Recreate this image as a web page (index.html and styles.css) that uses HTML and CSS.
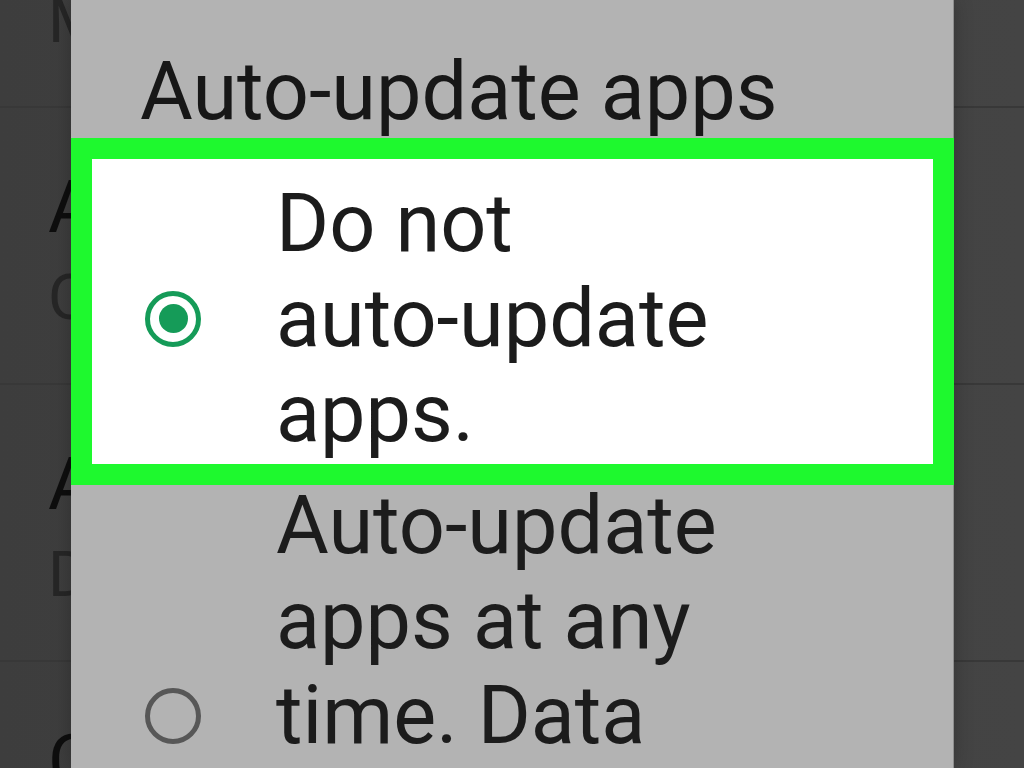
FILE: index.html
```html
<!DOCTYPE html>
<html lang="en">
<head>
<meta charset="utf-8">
<title>Auto-update apps</title>
<link rel="stylesheet" href="styles.css">
</head>
<body>
<div class="screen">
  <ul class="settings">
    <li class="setting">
      <div class="setting-title">Notifications</div>
      <div class="setting-sub">Manage notifications</div>
    </li>
    <li class="setting">
      <div class="setting-title">App download preference</div>
      <div class="setting-sub">Over any network</div>
    </li>
    <li class="setting">
      <div class="setting-title">Auto-update apps</div>
      <div class="setting-sub">Do not auto-update apps</div>
    </li>
    <li class="setting">
      <div class="setting-title">Clear local search history</div>
      <div class="setting-sub">Remove searches you have performed</div>
    </li>
  </ul>

  <div class="dialog" role="dialog" aria-label="Auto-update apps">
    <h1 class="dialog-title">Auto-update apps</h1>
    <ul class="options">
      <li class="option option-highlight">
        <span class="radio radio-on"><span class="radio-dot"></span></span>
        <span class="option-label">Do not<br>auto-update<br>apps.</span>
      </li>
      <li class="option">
        <span class="radio"></span>
        <span class="option-label">Auto-update<br>apps at any<br>time. Data<br>charges may<br>apply.</span>
      </li>
    </ul>
  </div>
</div>
</body>
</html>
```

FILE: styles.css
```css
html, body {
  margin: 0;
  padding: 0;
  width: 1024px;
  height: 768px;
  overflow: hidden;
  background: #414141;
  font-family: Roboto, "Liberation Sans", sans-serif;
}

.screen {
  position: relative;
  width: 1024px;
  height: 768px;
  overflow: hidden;
  background: linear-gradient(90deg, #3d3d3d 0%, #414141 50%, #444444 100%);
}

/* dimmed settings list behind the dialog */
.settings {
  list-style: none;
  margin: -169px 0 0 0;
  padding: 0;
}

.setting {
  box-sizing: border-box;
  height: 277px;
  padding: 55px 0 0 48px;
  border-bottom: 2px solid #383838;
  white-space: nowrap;
  overflow: hidden;
}

.setting-title {
  font-size: 73px;
  line-height: 88px;
  color: #0e0e0e;
}

.setting-sub {
  margin-top: 3px;
  font-size: 63px;
  line-height: 88px;
  color: #262626;
}

/* modal dialog */
.dialog {
  position: absolute;
  left: 71px;
  top: 0;
  width: 882px;
  height: 768px;
  background: #b3b3b3;
  box-shadow: 1px 0 0 #8e8e8e, 0 0 18px rgba(0, 0, 0, 0.25);
}

.dialog-title {
  margin: 0;
  padding: 44px 0 0 69px;
  font-size: 81px;
  line-height: 96px;
  font-weight: 400;
  color: #171717;
  white-space: nowrap;
}

.options {
  list-style: none;
  margin: 19px 0 0 0;
  padding: 0;
}

.option {
  display: flex;
  align-items: center;
  margin: 0 20px 0 21px;
  padding: 14px 0 0 0;
}

.option-highlight {
  background: #ffffff;
  padding: 17px 0 3px 0;
  outline: 21px solid #1ef92e;
}

.radio {
  box-sizing: border-box;
  flex: none;
  width: 56px;
  height: 56px;
  margin: 0 75px 0 53px;
  border: 5px solid #575757;
  border-radius: 50%;
  display: flex;
  align-items: center;
  justify-content: center;
}

.radio-on {
  border-color: #159b58;
}

.radio-dot {
  width: 29px;
  height: 29px;
  border-radius: 50%;
  background: #159b58;
}

.option-label {
  font-size: 81px;
  line-height: 95px;
  color: #1c1c1c;
  white-space: nowrap;
}
```
